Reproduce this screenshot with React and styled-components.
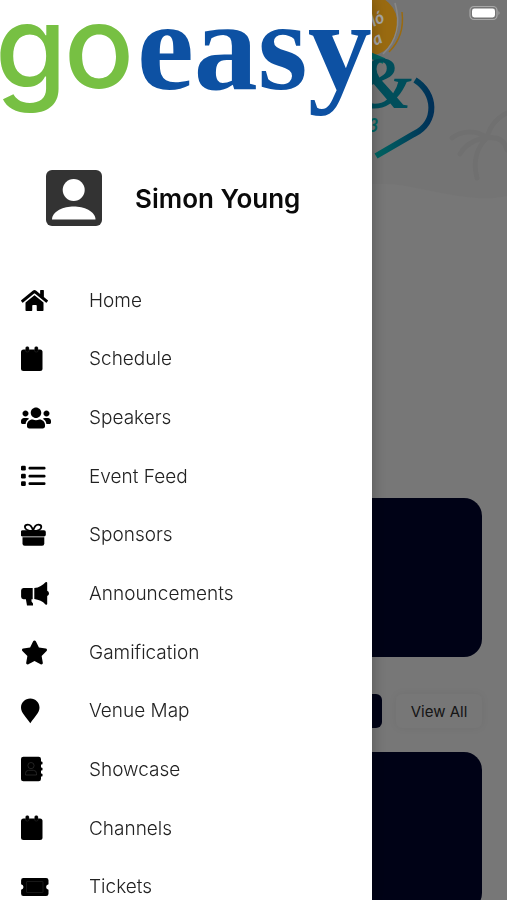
import styled, { createGlobalStyle } from 'styled-components'
import { FaHome, FaUsers, FaStar } from 'react-icons/fa'

const GlobalStyle = createGlobalStyle`
  * {
    box-sizing: border-box;
  }
  body {
    margin: 0;
    background: #b7b7b7;
    font-family: Inter, 'Open Sans', sans-serif;
    overflow: hidden;
  }
`

const Page = styled.main`
  height: 100vh;
  overflow: hidden;
  background: #b7b7b7;
`

const Hero = styled.header`
  height: 498px;
  display: flex;
  justify-content: flex-end;
`

const HeroArt = styled.svg`
  width: 160px;
  height: 260px;
`

const Content = styled.div`
  padding: 0 25px;
`

const Card = styled.section`
  height: 159px;
  border-radius: 18px;
  background: #000422;
`

const Filters = styled.div`
  display: flex;
  justify-content: flex-end;
  gap: 14px;
  padding: 37px 0 24px;
`

const FilterButton = styled.button`
  width: 86px;
  height: 34px;
  border: 0;
  border-radius: 6px;
  padding: 0;
  font: 400 15px Inter, sans-serif;
  color: ${({ $active }) => ($active ? '#fff' : '#222')};
  background: ${({ $active }) => ($active ? '#000422' : '#b7b7b7')};
  box-shadow: ${({ $active }) => ($active ? 'none' : '0 0 8px rgba(0, 0, 0, 0.06)')};
`

const Veil = styled.div`
  position: fixed;
  inset: 0;
  background: rgba(0, 0, 0, 0.35);
`

const Battery = styled.svg`
  position: fixed;
  top: 5px;
  right: 6px;
  width: 32px;
  height: 16px;
`

const Drawer = styled.aside`
  position: fixed;
  top: 0;
  bottom: 0;
  left: 0;
  width: 73.4%;
  overflow: hidden;
  display: flex;
  flex-direction: column;
  background: #fff;
  box-shadow: 0 0 14px rgba(0, 0, 0, 0.3);
`

const Logo = styled.svg`
  display: block;
  width: 100%;
  flex-shrink: 0;
  overflow: visible;
`

const Profile = styled.div`
  display: flex;
  align-items: center;
  gap: 33px;
  height: 56px;
  margin: 30px 0 45px;
  padding-left: 46px;
`

const Avatar = styled.svg`
  width: 56px;
  height: 56px;
`

const UserName = styled.h1`
  margin: 0;
  font-size: 26px;
  font-weight: 600;
  color: #0a0a0a;
`

const Nav = styled.nav`
  flex: 1;
  display: flex;
  margin-bottom: -16px;
`

const NavList = styled.ul`
  flex: 1;
  display: grid;
  grid-auto-rows: 1fr;
  margin: 0;
  padding: 0;
  list-style: none;
`

const NavLink = styled.a`
  height: 100%;
  display: flex;
  align-items: center;
  gap: 36px;
  padding-left: 21px;
  font-size: 19px;
  font-weight: 300;
  color: #222;
  text-decoration: none;
`

const IconBox = styled.span`
  width: 32px;
  height: 28px;
  display: flex;
  align-items: center;
  color: #000;
`

const Glyph = ({ children }) => (
  <svg width="32" height="28" viewBox="0.500 0 32 28" fill="currentColor" aria-hidden="true">
    {children}
  </svg>
)

const CalendarIcon = () => (
  <Glyph>
    <rect x="0.5" y="4.5" width="21.5" height="21.5" rx="2.5" />
    <rect x="5" y="1.5" width="3.6" height="5.500" rx="1.5" stroke="#777" strokeWidth="0.2" />
    <rect x="14" y="1.5" width="3.6" height="5.500" rx="1.5" stroke="#777" strokeWidth="0.2" />
  </Glyph>
)

const ListIcon = () => (
  <Glyph>
    {[4, 12, 19.5].map((y) => (
      <g key={y}>
        <rect x="0.5" y={y - 0.3} width="4.8" height="4.8" rx="1.2" />
        <rect x="8" y={y + 0.7} width="17" height="2.8" rx="1.2" />
      </g>
    ))}
  </Glyph>
)

const GiftIcon = () => (
  <Glyph>
    <path
      d="M12.6 10C8 10 4.4 8.4 4.4 6C4.4 4.6 5.6 3.6 7.4 3.6C10.4 3.6 11.8 6.6 12.6 10C13.4 6.6 14.8 3.6 17.8 3.6C19.6 3.6 20.8 4.6 20.8 6C20.8 8.4 17.2 10 12.6 10"
      fill="none"
      stroke="#000"
      strokeWidth="1.8"
    />
    <rect x="0.3" y="9.3" width="25" height="6.2" rx="1.8" />
    <path d="M2 16.2H23.8V22.5Q23.8 24.7 21.6 24.7H4.2Q2 24.7 2 22.5Z" />
  </Glyph>
)

const MegaphoneIcon = () => (
  <Glyph>
    <path d="M3 8H12.2V19.2H11V21.5L12.5 23.5V25.6H6.5L5.4 19.2H3Q0.6 19 0.6 16.8V10.4Q0.6 8.2 3 8Z" />
    <path d="M13.8 8C18.5 7.6 22.5 5.2 25 2.2Q26.5 1.4 26.7 2.8V10.8Q28.5 11.5 28.5 13.4Q28.5 15.2 26.7 16V24Q26.4 25.4 25 24.4C22.2 21.4 18.3 19.5 13.8 19Z" />
  </Glyph>
)

const PinIcon = () => (
  <Glyph>
    <path d="M9.8 1.6C4.6 1.6 0.5 5.6 0.5 10.8C0.5 15.8 5.8 20.2 9.8 26.2C13.8 20.2 19 15.8 19 10.8C19 5.6 15 1.6 9.8 1.6Z" />
  </Glyph>
)

const BookIcon = () => (
  <Glyph>
    <rect x="0.5" y="1.7" width="20" height="24.6" rx="2.4" />
    <rect x="19" y="6.4" width="3" height="3.2" rx="1.2" />
    <rect x="19" y="12.4" width="3" height="3.2" rx="1.2" />
    <rect x="19" y="18.4" width="3" height="3.2" rx="1.2" />
    <g fill="none" stroke="#2c2c2c" strokeWidth="0.8">
      <circle cx="10.5" cy="10.6" r="3.1" />
      <path d="M5 20V18.4Q5 15.3 8.2 15.3H12.8Q16 15.3 16 18.4V20Z" />
    </g>
  </Glyph>
)

const TicketIcon = () => (
  <Glyph>
    <path d="M2.8 5H25.6Q28 5 28 7.2V11.2Q25.6 11.8 25.6 14Q25.6 16.2 28 16.8V20.8Q28 23 25.6 23H2.8Q0.6 23 0.6 20.8V16.8Q3 16.2 3 14Q3 11.8 0.6 11.2V7.2Q0.6 5 2.8 5Z" />
    <rect x="6" y="8.5" width="16.5" height="11" rx="0.5" fill="none" stroke="#222" strokeWidth="0.7" />
  </Glyph>
)

const items = [
  { label: 'Home', icon: <FaHome size={27} /> },
  { label: 'Schedule', icon: <CalendarIcon /> },
  { label: 'Speakers', icon: <FaUsers size={30} /> },
  { label: 'Event Feed', icon: <ListIcon /> },
  { label: 'Sponsors', icon: <GiftIcon /> },
  { label: 'Announcements', icon: <MegaphoneIcon /> },
  { label: 'Gamification', icon: <FaStar size={27} /> },
  { label: 'Venue Map', icon: <PinIcon /> },
  { label: 'Showcase', icon: <BookIcon /> },
  { label: 'Channels', icon: <CalendarIcon /> },
  { label: 'Tickets', icon: <TicketIcon /> },
]

const App = () => {
  return (
    <>
      <GlobalStyle />
      <Page>
        <Hero>
          <HeroArt viewBox="347 0 160 260" aria-hidden="true">
            <defs>
              <linearGradient id="teal" x1="0" y1="0" x2="1" y2="0">
                <stop offset="0" stopColor="#009a96" />
                <stop offset="1" stopColor="#004a86" />
              </linearGradient>
            </defs>
            <path d="M347 0H507V196C470 205 420 185 386 184H347Z" fill="#b3b3b3" />
            {/* palm tree */}
            <g fill="none" stroke="#adadad" strokeWidth="5" strokeLinecap="round">
              <path d="M477 178C472 160 478 146 487 138C478 130 462 130 452 138M487 138C476 138 464 146 460 154M487 138C490 124 500 116 507 113M487 138C500 136 505 142 507 150" />
            </g>
            {/* coin */}
            <circle cx="367" cy="25" r="31" fill="#eba31a" />
            <path d="M395 3Q404 34 383 54" fill="none" stroke="#d0d0d0" strokeWidth="1.5" />
            <path d="M402 12Q405 36 389 52" fill="none" stroke="#eba31a" strokeWidth="1.5" />
            {/* badge outline */}
            <path d="M365 53L384 61" stroke="#009a96" strokeWidth="6" />
            <path d="M415 80C436 93 438 122 414 134L376 156" fill="none" stroke="url(#teal)" strokeWidth="6" />
            <g fontFamily="Lato, sans-serif" fontWeight="700" fontStyle="italic">
              <text x="371" y="26" fontSize="17" fill="#fff" transform="rotate(-25 374 20)">ló</text>
              <text x="373" y="45" fontSize="17" fill="#fff" transform="rotate(-25 376 40)">a</text>
              <text x="368" y="132" fontSize="18" fill="#009a96">3</text>
            </g>
            <text
              x="355"
              y="108"
              fontFamily="Liberation Serif, serif"
              fontWeight="700"
              fontStyle="italic"
              fontSize="74"
              fill="#00788c"
            >
              &amp;
            </text>
          </HeroArt>
        </Hero>
        <Content>
          <Card />
          <Filters>
            <FilterButton $active aria-label="Today" />
            <FilterButton>View All</FilterButton>
          </Filters>
          <Card />
        </Content>
      </Page>
      <Veil />
      <Battery viewBox="0 0 32 16" aria-hidden="true">
        <rect x="1" y="1.5" width="27" height="13" rx="4" fill="none" stroke="#a8a8a8" strokeWidth="1.2" />
        <rect x="3" y="3.5" width="23" height="9" rx="2.4" fill="#fff" />
        <path d="M29.5 6Q31.5 8 29.5 10Z" fill="#a8a8a8" />
      </Battery>
      <Drawer>
        <Logo viewBox="0 0 372 140" role="img" aria-label="goeasy">
          <g fontFamily="Inter, sans-serif" fontWeight="500" fontSize="116" fill="#77c043">
            <text x="-5" y="88">g</text>
            <text x="64" y="88">o</text>
          </g>
          <text x="137" y="89" fontFamily="Liberation Serif, serif" fontWeight="700" fontSize="128" fill="#0d51a3">
            easy
          </text>
        </Logo>
        <Profile>
          <Avatar viewBox="0 0 56 56" aria-hidden="true">
            <rect width="56" height="56" rx="6" fill="#333" />
            <circle cx="27.7" cy="20" r="11" fill="#fff" />
            <path d="M6 49.5C6 41 18 36.5 27.7 36.5S49.5 41 49.5 49.5Z" fill="#fff" />
          </Avatar>
          <UserName>Simon Young</UserName>
        </Profile>
        <Nav>
          <NavList>
            {items.map(({ label, icon }) => (
              <li key={label}>
                <NavLink href="#">
                  <IconBox>{icon}</IconBox>
                  {label}
                </NavLink>
              </li>
            ))}
          </NavList>
        </Nav>
      </Drawer>
    </>
  )
}

export default App
